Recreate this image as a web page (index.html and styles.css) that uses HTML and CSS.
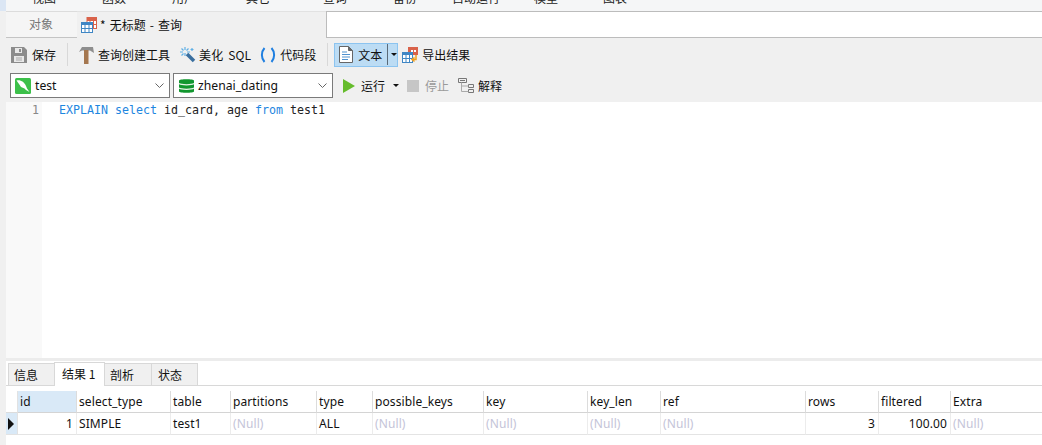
FILE: index.html
```html
<!DOCTYPE html>
<html lang="zh">
<head>
<meta charset="utf-8">
<title>无标题 - 查询</title>
<link rel="stylesheet" href="styles.css">
</head>
<body>
<div class="app">
  <div class="menubar">
    <span class="m m1">视图</span><span class="m m2">函数</span><span class="m m3">用户</span><span class="m m4">其它</span><span class="m m5">查询</span><span class="m m6">备份</span><span class="m m7">自动运行</span><span class="m m8">模型</span><span class="m m9">图表</span>
  </div>
  <div class="main">
    <div class="tabs">
      <div class="tab-obj">对象</div>
      <div class="tab-query">
        <svg class="ic" width="16" height="16" viewBox="0 0 16 16"><rect x="6" y="0.5" width="9.5" height="11" fill="#fff" stroke="#d9624a"/><rect x="6" y="0" width="10" height="4" fill="#d9624a"/><path d="M9 4v7M12.500 4v7M6 7.500h10" stroke="#d9624a"/><rect x="0.500" y="5.500" width="11" height="10" fill="#fff" stroke="#3f86c4"/><rect x="0" y="5" width="12" height="3" fill="#3f86c4"/><path d="M4 8v7M8 8v7M0 11.500h12" stroke="#3f86c4"/></svg>
        <span>* 无标题 - 查询</span>
      </div>
      <div class="tab-rest"></div>
    </div>
    <div class="toolbar t1">
      <div class="btn b-save">
        <svg width="16" height="16" viewBox="0 0 16 16"><path d="M0 0h13l3 3v13H0z" fill="#8c8c8c"/><rect x="4" y="1" width="7" height="5" fill="#e8e8e8"/><rect x="8" y="2" width="2" height="3" fill="#8c8c8c"/><rect x="3" y="9" width="10" height="6" fill="#e8e8e8"/><path d="M5 11h6M5 13h6" stroke="#aaa"/></svg>
        <span>保存</span>
      </div>
      <div class="sep"></div>
      <div class="btn b-build">
        <svg width="15" height="18" viewBox="0 0 15 18"><path d="M3 1h11l1 6-4-2.500H3L0 6z" fill="#8e8e8e"/><rect x="5" y="4" width="4.500" height="14" fill="#a5774f"/></svg>
        <span>查询创建工具</span>
      </div>
      <div class="btn b-beaut">
        <svg width="16" height="16" viewBox="0 0 16 16"><path d="M7 7l7 7" stroke="#3a6f9f" stroke-width="3.500"/><path d="M5 0v3M5 6v3M0 5h3M7 5h3M1.500 1.500l2 2M8.500 1.500l-2 2M1.500 8.500l2-2M12 1v3M10.500 2.500h3" stroke="#5fb0e6" stroke-width="1.200"/></svg>
        <span class="spaced">美化 SQL</span>
      </div>
      <div class="btn b-snip">
        <svg width="16" height="16" viewBox="0 0 16 16"><path d="M4.500 1C1 5 1 11 4.500 15M11.500 1C15 5 15 11 11.500 15" fill="none" stroke="#1f7fe0" stroke-width="2"/></svg>
        <span>代码段</span>
      </div>
      <div class="sep s2"></div>
      <div class="btn-text">
        <svg width="14" height="17" viewBox="0 0 14 17"><path d="M0.500 0.500h9l4 4v12h-13z" fill="#fff" stroke="#666"/><path d="M9.500 0.500v4h4" fill="#666" stroke="#666"/><path d="M3 6h5M3 8.500h8M3 11h8M3 13.500h6" stroke="#4f92cf"/></svg>
        <span class="tx">文本</span>
        <i class="split"></i>
        <i class="caret"></i>
      </div>
      <div class="btn b-export">
        <svg width="16" height="16" viewBox="0 0 16 16"><rect x="6" y="0" width="10" height="8" fill="#d9624a"/><path d="M9 3h2v2H9zM12 3h2v2h-2z" fill="#fff"/><rect x="0.500" y="5.500" width="10" height="10" fill="#fff" stroke="#3f86c4"/><rect x="0" y="5" width="11" height="3" fill="#3f86c4"/><path d="M4 8v7M7.500 8v7M0 11.500h11" stroke="#3f86c4"/><path d="M14 8v4.500h-3M12.500 10.500L10 12.500l2.500 2" fill="none" stroke="#f2a01f" stroke-width="1.500"/></svg>
        <span>导出结果</span>
      </div>
    </div>
    <div class="toolbar t2">
      <div class="combo c1">
        <svg width="16" height="16" viewBox="0 0 16 16"><rect width="16" height="16" rx="1.500" fill="#3cc04a"/><path d="M1.500 2.500c4-1 8 1.500 9.500 5.500l1 2.500 2.500 3.500-3.500-2-1.500-1.500-3.500-1.500L4 6 1.500 2.500z" fill="#fff"/></svg>
        <span>test</span>
        <svg class="chev" width="9" height="5" viewBox="0 0 9 5"><path d="M0.500 0.500l4 4 4-4" fill="none" stroke="#666"/></svg>
      </div>
      <div class="combo c2">
        <svg width="15" height="16" viewBox="0 0 15 16"><path d="M0 2.500C0 .8 15 .8 15 2.500v11c0 1.700-15 1.700-15 0z" fill="#11962e"/><path d="M0 5.500c2 1.700 13 1.700 15 0M0 10c2 1.700 13 1.700 15 0" fill="none" stroke="#e8f5e8" stroke-width="1.200"/></svg>
        <span>zhenai_dating</span>
        <svg class="chev" width="9" height="5" viewBox="0 0 9 5"><path d="M0.500 0.500l4 4 4-4" fill="none" stroke="#666"/></svg>
      </div>
      <div class="btn b-run">
        <svg width="12" height="14" viewBox="0 0 12 14"><path d="M0 0l12 7-12 7z" fill="#65bc2c"/></svg>
        <span>运行</span>
        <i class="caret"></i>
      </div>
      <div class="btn b-stop">
        <i class="stop"></i>
        <span>停止</span>
      </div>
      <div class="btn b-exp">
        <svg width="16" height="16" viewBox="0 0 16 16"><path d="M0.500 0.500h8v4h-8zM10.500 6.500h5v3h-5zM10.500 11.500h5v3h-5z" fill="none" stroke="#777"/><path d="M2 2.500h5" stroke="#777"/><path d="M3.500 4.500v9h7M3.500 8h7" fill="none" stroke="#aaa"/></svg>
        <span>解释</span>
      </div>
    </div>
    <div class="editor">
      <div class="gutter">1</div>
      <div class="code"><span class="kw">EXPLAIN</span> <span class="kw">select</span> id_card, age <span class="kw">from</span> test1</div>
    </div>
    <div class="divider"></div>
    <div class="lower">
      <div class="rtabs">
        <div class="rt r1">信息</div>
        <div class="rt on">结果 1</div>
        <div class="rt r3">剖析</div>
        <div class="rt r4">状态</div>
      </div>
      <div class="grid">
        <div class="ind head"></div>
        <div class="h sel">id</div><div class="h">select_type</div><div class="h">table</div><div class="h">partitions</div><div class="h">type</div><div class="h">possible_keys</div><div class="h">key</div><div class="h">key_len</div><div class="h">ref</div><div class="h">rows</div><div class="h">filtered</div><div class="h">Extra</div>
        <div class="ind"><i class="arrow"></i></div>
        <div class="d num">1</div><div class="d">SIMPLE</div><div class="d">test1</div><div class="d nul">(Null)</div><div class="d">ALL</div><div class="d nul">(Null)</div><div class="d nul">(Null)</div><div class="d nul">(Null)</div><div class="d nul">(Null)</div><div class="d num">3</div><div class="d num">100.00</div><div class="d nul">(Null)</div>
      </div>
    </div>
  </div>
</div>
</body>
</html>
```

FILE: styles.css
```css
* { box-sizing: border-box; }
html, body { margin: 0; padding: 0; }
body {
  width: 1042px;
  height: 445px;
  overflow: hidden;
  background: #f0f0f0;
  color: #111;
  font-family: "Noto Sans CJK SC", "Noto Sans", sans-serif;
  font-size: 12px;
}
svg, i { flex: none; display: block; }
.app { height: 445px; display: flex; flex-direction: column; }

.menubar {
  height: 11px;
  background: #f5f6f7;
  position: relative;
  overflow: hidden;
  border-left: 6px solid #dbe6f4;
  line-height: 12px;
  color: #222;
}
.m { position: absolute; top: -8px; }
.m1 { left: 26px; }
.m2 { left: 96px; }
.m3 { left: 166px; }
.m4 { left: 240px; }
.m5 { left: 317px; }
.m6 { left: 387px; }
.m7 { left: 446px; }
.m8 { left: 528px; }
.m9 { left: 597px; }

.main { flex: 1; display: flex; flex-direction: column; padding-left: 6px; background: #f0f0f0; }

.tabs { height: 27px; display: flex; }
.tab-obj {
  width: 71px;
  background: #f5f5f5;
  border-top: 1px solid #dcdcdc;
  border-bottom: 1px solid #c4c4c4;
  color: #777;
  display: flex;
  align-items: center;
  justify-content: center;
  padding: 0 1px 2px 0;
}
.tab-query {
  width: 249px;
  display: flex;
  align-items: center;
  gap: 3px;
  padding-left: 4px;
  color: #111;
  border-top: 1px solid #e2e2e2;
}
.tab-query span { font-size: 12px; word-spacing: 1.4px; margin-top: -2px; }
.tab-rest {
  flex: 1;
  background: #fff;
  border: 1px solid #bcbcbc;
  border-right: 0;
}

.toolbar { display: flex; align-items: center; }
.t1 { height: 33px; padding-left: 5px; }
.t2 { height: 31px; padding: 0 0 2px 4px; }
.btn { display: flex; align-items: center; gap: 5px; white-space: nowrap; }
.b-build { gap: 4px; margin-left: 11px; }
.b-beaut { gap: 3px; margin-left: 10px; }
.b-snip { gap: 4px; margin-left: 9px; }
.b-export { gap: 4px; margin-left: 4px; }
.spaced { word-spacing: 2px; letter-spacing: 0.15px; }
.sep { width: 1px; height: 23px; background: #d8d8d8; margin-left: 11px; }
.s2 { margin-left: 11px; }
.btn-text {
  margin-left: 6px;
  width: 64px;
  height: 24px;
  background: #bcdcf4;
  border: 1px solid #8cc4f0;
  display: flex;
  align-items: center;
  padding-left: 4px;
  gap: 5px;
}
.tx { width: 24px; white-space: nowrap; }
.split { width: 1px; height: 21px; background: #5a6a78; }
.caret {
  width: 0;
  height: 0;
  border-left: 3px solid transparent;
  border-right: 3px solid transparent;
  border-top: 3px solid #111;
  margin-left: -2px;
}

.combo {
  height: 25px;
  background: #fff;
  border: 1px solid #7a7a7a;
  display: flex;
  align-items: center;
  gap: 4px;
  padding-left: 4px;
  font: 12.2px "Noto Sans", sans-serif;
}
.c1 { width: 160px; }
.c2 { width: 160px; margin-left: 3px; padding-left: 5px; }
.chev { margin-left: auto; margin-right: 5px; }
.b-run { margin-left: 10px; gap: 6px; }
.b-run .caret { margin-left: 2px; }
.b-stop { margin-left: 8px; gap: 6px; color: #9a9a9a; }
.stop { width: 12px; height: 12px; background: #c6c6c6; }
.b-exp { margin-left: 9px; gap: 4px; }

.editor { height: 256px; background: #fff; display: flex; }
.gutter {
  width: 36px;
  background: #f9f9f9;
  color: #888;
  text-align: right;
  padding-right: 3px;
  padding-top: 1px;
  font: 11.63px/15px "DejaVu Sans Mono", monospace;
}
.code {
  padding: 1px 0 0 17px;
  font: 11.63px/15px "DejaVu Sans Mono", monospace;
  color: #222;
  white-space: pre;
}
.kw { color: #1e86e0; }
.divider { height: 3px; background: #ececec; }
.lower { flex: 1; background: #fff; display: flex; flex-direction: column; }

.rtabs {
  height: 25px;
  padding: 1px 0 0 2px;
  display: flex;
  align-items: flex-end;
  border-bottom: 1px solid #d8d8d8;
  background: #fff;
}
.rt {
  height: 22px;
  background: #f0f0f0;
  border: 1px solid #d8d8d8;
  border-bottom: 0;
  border-right: 0;
  width: 46px;
  display: flex;
  align-items: center;
  white-space: nowrap;
}
.r1 { padding-left: 5px; }
.rt.on {
  width: 51px;
  height: 24px;
  background: #fff;
  border-right: 1px solid #d8d8d8;
  margin-bottom: -1px;
  padding: 0 0 3px 7px;
}
.r3 { border-left: 0; padding-left: 5px; }
.r4 { border-right: 1px solid #d8d8d8; width: 47px; padding-left: 6px; }

.grid {
  margin-top: 5px;
  display: grid;
  grid-template-columns: 12px 59px 94px 60px 86px 56px 111px 104px 73px 145px 73px 72px 1fr;
  grid-template-rows: 22px 22px;
  font-family: "Noto Sans", sans-serif;
  font-size: 12px;
  letter-spacing: 0.1px;
  color: #111;
}
.ind { background: #d9e9f7; border-bottom: 1px solid #e2e2e2; border-right: 1px solid #e2e2e2; display: flex; align-items: center; padding-left: 2px; }
.ind.head { background: #fff; border-bottom: 1px solid #dcdcdc; }
.arrow {
  width: 0;
  height: 0;
  border-top: 6px solid transparent;
  border-bottom: 6px solid transparent;
  border-left: 6px solid #111;
}
.h, .d {
  display: flex;
  align-items: center;
  padding: 0 2px;
  white-space: nowrap;
  overflow: hidden;
}
.h {
  border-right: 1px solid #dcdcdc;
  border-bottom: 1px solid #d4d4d4;
  background: #fff;
}
.h:nth-child(13) { border-right: 0; }
.h.sel { background: #d9e9f7; }
.d {
  border-right: 1px solid #ececec;
  border-bottom: 1px solid #e4e4e4;
}
.d:last-child { border-right: 0; }
.num { justify-content: flex-end; padding-right: 3px; }
.nul { color: #c4c4d8; }
```
